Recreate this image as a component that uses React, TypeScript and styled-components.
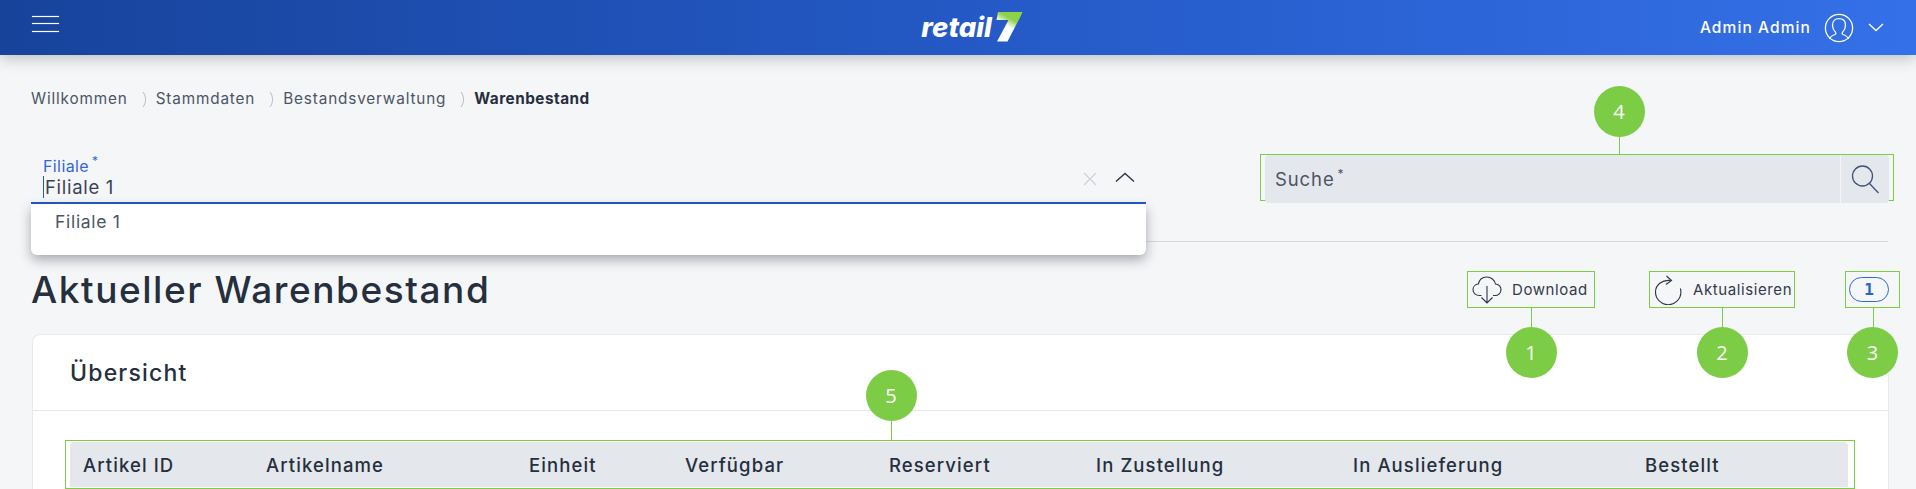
import styled, { createGlobalStyle } from "styled-components";

const green = "#7ccc45";
const ink = "#252f3d";
const slate = "#4b5565";
const blue = "#2059c8";

const crumbs = ["Willkommen", "Stammdaten", "Bestandsverwaltung"];

const columns = [
  "Artikel ID",
  "Artikelname",
  "Einheit",
  "Verfügbar",
  "Reserviert",
  "In Zustellung",
  "In Auslieferung",
  "Bestellt",
];

const App = () => {
  return (
    <>
      <GlobalStyle />
      <Header>
        <Burger aria-label="Menü">
          <span />
          <span />
          <span />
        </Burger>
        <Logo>
          <LogoText>retail</LogoText>
          <svg width="27" height="30" viewBox="0 0 27 30">
            <defs>
              <linearGradient id="seven" x1="0.7" y1="0" x2="0.2" y2="1">
                <stop offset="0.25" stopColor="#8ed24a" />
                <stop offset="0.5" stopColor="#ffffff" />
              </linearGradient>
            </defs>
            <path d="M2 0H26.5L24 5.5L11.5 29.5H1L12.5 8H0.5Z" fill="url(#seven)" />
          </svg>
        </Logo>
        <UserMenu>
          <UserName>Admin Admin</UserName>
          <svg width="30" height="30" viewBox="0 0 30 30" fill="none" stroke="#fff" strokeWidth="1.3">
            <circle cx="15" cy="15" r="13.6" />
            <path d="M5.5 26c.8-2.800 3-3.600 5.500-4.500 1-.4 1.100-1.600.4-2.400-1.900-2-2.900-4.400-2.900-6.900 0-3.900 2.500-6.500 6.500-6.500s6.500 2.600 6.500 6.500c0 2.500-1 4.900-2.900 6.900-.7.8-.6 2 .4 2.400 2.500.9 4.700 1.700 5.500 4.500" />
          </svg>
          <UserChevron width="16" height="9" viewBox="0 0 16 9" fill="none" stroke="#fff" strokeWidth="1.3">
            <path d="M1 1l7 6.5L15 1" />
          </UserChevron>
        </UserMenu>
      </Header>

      <Main>
        <Breadcrumb>
          {crumbs.map((crumb) => (
            <Crumb key={crumb}>
              {crumb}
              <CrumbSeparator width="6" height="17" viewBox="0 0 6 17" fill="none" stroke="#b5bcc6" strokeWidth="1">
                <path d="M1 1c3.400 4.600 3.400 10.400 0 15" />
              </CrumbSeparator>
            </Crumb>
          ))}
          <CurrentCrumb>Warenbestand</CurrentCrumb>
        </Breadcrumb>

        <FilterRow>
          <BranchField>
            <BranchLabel>
              Filiale<sup>*</sup>
            </BranchLabel>
            <BranchValue>Filiale 1</BranchValue>
            <BranchIcons>
              <svg width="14" height="14" viewBox="0 0 14 14" stroke="#cdd1d9" strokeWidth="1.2">
                <path d="M1 1l12 12M13 1L1 13" />
              </svg>
              <svg width="20" height="11" viewBox="0 0 20 11" fill="none" stroke="#2d3645" strokeWidth="1.4">
                <path d="M1 9.500L10 1.500l9 8" />
              </svg>
            </BranchIcons>
            <BranchMenu>
              <BranchOption>Filiale 1</BranchOption>
            </BranchMenu>
          </BranchField>

          <SearchFrame>
            <Callout $side="top" $stem={18} $offset={42}>
              4
            </Callout>
            <SearchField>
              <SearchLabel>
                Suche<sup>*</sup>
              </SearchLabel>
              <SearchButton aria-label="Suche">
                <svg width="30" height="30" viewBox="0 0 30 30" fill="none" stroke="#3f5378" strokeWidth="1.3">
                  <circle cx="12.500" cy="12" r="10" />
                  <path d="M19.500 19.500L28.500 29" />
                </svg>
              </SearchButton>
            </SearchField>
          </SearchFrame>
        </FilterRow>

        <Divider />

        <TitleRow>
          <PageTitle>Aktueller Warenbestand</PageTitle>
          <Actions>
            <ActionFrame $width={128}>
              <Callout $side="bottom" $stem={20}>
                1
              </Callout>
              <svg width="30" height="28" viewBox="0 0 30 28" fill="none" stroke="#2c3444" strokeWidth="1.1">
                <path d="M9.500 19.500H7.500C3.800 19.500 1 17 1 13.600c0-3 2.300-5.300 5.300-5.600C7.300 3.800 10.600 1 14.700 1c4.400 0 8 3 8.700 7 3.200.1 5.600 2.600 5.600 5.700 0 3.200-2.600 5.800-6 5.800h-2" />
                <path d="M15 10v17M9.500 21.500L15 27l5.500-5.500" />
              </svg>
              <ActionLabel $gap={10}>Download</ActionLabel>
            </ActionFrame>
            <ActionFrame $width={146}>
              <Callout $side="bottom" $stem={20}>
                2
              </Callout>
              <svg width="28" height="30" viewBox="0 0 28 30" fill="none" stroke="#2c3444" strokeWidth="1.1">
                <path d="M16.500 5.500C8 4.500 1.500 10 1.500 17a12.700 12.700 0 0 0 25.400 0c0-1.300-.2-2.500-.5-3.500" />
                <path d="M12.500 1l5 4.500-5.500 4" />
              </svg>
              <ActionLabel $gap={11}>Aktualisieren</ActionLabel>
            </ActionFrame>
            <CountFrame>
              <Callout $side="bottom" $stem={20}>
                3
              </Callout>
              <CountBadge>1</CountBadge>
            </CountFrame>
          </Actions>
        </TitleRow>

        <Card>
          <CardTitle>Übersicht</CardTitle>
          <TableArea>
            <TableFrame>
              <Callout $side="top" $stem={20} $offset={-69}>
                5
              </Callout>
              <TableHead>
                {columns.map((column) => (
                  <HeadCell key={column}>{column}</HeadCell>
                ))}
              </TableHead>
            </TableFrame>
          </TableArea>
        </Card>
      </Main>
    </>
  );
};

export default App;

const GlobalStyle = createGlobalStyle`
  html, body {
    margin: 0;
    height: 489px;
    overflow: hidden;
    background: #f5f6f8;
    font-family: Inter, "Noto Sans", sans-serif;
    color: ${ink};
  }
  * {
    box-sizing: border-box;
  }
  sup {
    font-size: 12px;
    line-height: 0;
    margin-left: 3px;
  }
`;

const Header = styled.header`
  position: relative;
  z-index: 2;
  height: 55px;
  display: grid;
  grid-template-columns: 1fr auto 1fr;
  align-items: center;
  padding: 0 32px;
  background: linear-gradient(90deg, #17439b 0%, #2459c5 50%, #3470e8 100%);
  box-shadow: 0 3px 14px rgba(30, 40, 50, 0.28);
`;

const Burger = styled.button`
  width: 27px;
  height: 16px;
  margin-top: -8px;
  padding: 0;
  border: 0;
  background: none;
  display: flex;
  flex-direction: column;
  justify-content: space-between;

  > span {
    display: block;
    height: 1px;
    background: #fff;
    box-shadow: 0 0 1px #fff;
  }
`;

const Logo = styled.div`
  display: flex;
  align-items: flex-end;
  gap: 4px;
  margin: -1px 0 0 28px;
`;

const LogoText = styled.span`
  font-size: 27.5px;
  line-height: 30px;
  font-weight: 800;
  font-style: italic;
  color: #fff;
`;

const UserMenu = styled.div`
  justify-self: end;
  display: flex;
  align-items: center;
`;

const UserName = styled.span`
  font-size: 15.5px;
  font-weight: 500;
  letter-spacing: 1.1px;
  color: #fff;
  margin-right: 13px;
`;

const UserChevron = styled.svg`
  margin-left: 14px;
`;

const Main = styled.main`
  padding: 33px 16px 0 31px;
`;

const Breadcrumb = styled.nav`
  height: 20px;
  display: flex;
  align-items: center;
  font-size: 15.3px;
  letter-spacing: 0.85px;
  color: ${slate};
`;

const Crumb = styled.span`
  display: flex;
  align-items: center;
`;

const CrumbSeparator = styled.svg`
  margin: 3px 8px 0 14px;
`;

const CurrentCrumb = styled.span`
  font-weight: 700;
  letter-spacing: 0.5px;
  color: ${ink};
`;

const FilterRow = styled.div`
  margin-top: 46px;
  height: 50px;
  display: flex;
  justify-content: space-between;
  align-items: flex-start;
`;

const BranchField = styled.div`
  position: relative;
  width: 1115px;
  height: 50px;
  padding: 1px 0 0 12px;
  border-bottom: 2px solid ${blue};
`;

const BranchLabel = styled.div`
  height: 21px;
  font-size: 16px;
  line-height: 22px;
  letter-spacing: 0.4px;
  color: #3368d8;

  > sup {
    position: relative;
    top: -1px;
  }
`;

const BranchValue = styled.div`
  height: 22px;
  padding-left: 1px;
  border-left: 1px solid ${blue};
  font-size: 18.5px;
  line-height: 22px;
  letter-spacing: 0.7px;
  color: #3a4351;
`;

const BranchIcons = styled.div`
  position: absolute;
  right: 11px;
  top: 18px;
  display: flex;
  align-items: flex-start;
  gap: 18px;
`;

const BranchMenu = styled.div`
  position: absolute;
  z-index: 1;
  left: 0;
  right: 0;
  top: 50px;
  height: 51px;
  padding: 6px 24px;
  background: #fff;
  border-radius: 0 0 6px 6px;
  box-shadow: 0 5px 12px rgba(40, 45, 55, 0.38);
`;

const BranchOption = styled.div`
  font-size: 17.5px;
  line-height: 24px;
  letter-spacing: 0.7px;
  color: ${slate};
`;

const Framed = styled.div`
  position: relative;
  border: 1px solid ${green};
`;

const Callout = styled.span<{ $side: "top" | "bottom"; $stem: number; $offset?: number }>`
  position: absolute;
  left: calc(50% + ${(p) => p.$offset ?? 0}px);
  ${(p) => (p.$side === "top" ? "bottom" : "top")}: calc(100% + ${(p) => p.$stem}px);
  width: 51px;
  height: 51px;
  margin-left: -25.5px;
  display: flex;
  align-items: center;
  justify-content: center;
  border-radius: 50%;
  background: ${green};
  font-family: "Open Sans", sans-serif;
  font-size: 20px;
  color: #fff;

  &::after {
    content: "";
    position: absolute;
    left: 50%;
    width: 1px;
    height: ${(p) => p.$stem}px;
    ${(p) => (p.$side === "top" ? "top" : "bottom")}: 100%;
    background: ${green};
  }
`;

const SearchFrame = styled(Framed)`
  width: 634px;
  height: 47px;
  margin-right: 6px;
  padding: 0 4px;
`;

const SearchField = styled.div`
  height: 48px;
  display: flex;
  align-items: stretch;
  justify-content: space-between;
  background: #e4e7ec;
  border-radius: 4px;
`;

const SearchLabel = styled.span`
  padding: 12px 0 0 10px;
  font-size: 18.5px;
  line-height: 24px;
  letter-spacing: 0.9px;
  color: ${slate};

  > sup {
    position: relative;
    top: -1px;
  }
`;

const SearchButton = styled.button`
  width: 49px;
  padding: 0 0 0 9px;
  display: flex;
  align-items: center;
  border: 0;
  border-left: 1px solid #f3f4f6;
  background: none;
`;

const Divider = styled.hr`
  margin: 37px 12px 0 0;
  border: 0;
  height: 1px;
  background: #d8d9dc;
`;

const TitleRow = styled.div`
  margin-top: 29px;
  height: 37px;
  display: flex;
  justify-content: space-between;
  align-items: center;
`;

const PageTitle = styled.h1`
  margin: 0;
  font-size: 37px;
  font-weight: 500;
  letter-spacing: 1.55px;
  color: ${ink};
`;

const Actions = styled.div`
  display: flex;
  gap: 50px;
  align-items: center;

  > :first-child {
    margin-right: 4px;
  }
`;

const ActionFrame = styled(Framed)<{ $width: number }>`
  width: ${(p) => p.$width}px;
  height: 37px;
  padding-left: 4px;
  display: flex;
  align-items: center;
`;

const ActionLabel = styled.span<{ $gap: number }>`
  margin-left: ${(p) => p.$gap}px;
  font-size: 15px;
  font-weight: 400;
  letter-spacing: 0.6px;
  white-space: nowrap;
  color: #333b4a;
`;

const CountFrame = styled(Framed)`
  width: 55px;
  height: 37px;
  display: flex;
  align-items: center;
  padding-left: 3px;
`;

const CountBadge = styled.span`
  width: 40px;
  height: 25px;
  display: flex;
  align-items: center;
  justify-content: center;
  border: 1px solid #2f6ad6;
  border-radius: 13px;
  font-family: "DejaVu Sans Mono", monospace;
  font-weight: 700;
  font-size: 16px;
  color: #2563d0;
`;

const Card = styled.section`
  margin: 26px 11px 0 1px;
  height: 155px;
  background: #fff;
  border: 1px solid #e8eaee;
  border-bottom: 0;
  border-radius: 8px 8px 0 0;
`;

const CardTitle = styled.h2`
  margin: 0;
  height: 76px;
  padding-left: 37px;
  border-bottom: 1px solid #e6e7ea;
  font-size: 23px;
  font-weight: 500;
  line-height: 76px;
  letter-spacing: 1.2px;
  color: ${ink};
`;

const TableArea = styled.div`
  padding: 29px 33px 0 32px;
`;

const TableFrame = styled(Framed)`
  height: 49px;
  padding: 1px 6px 1px 4px;
`;

const TableHead = styled.div`
  height: 45px;
  padding-left: 13px;
  display: grid;
  grid-template-columns: 183px 263px 156px 204px 207px 257px 292px 1fr;
  align-items: center;
  background: #e4e7ec;
  border-radius: 4px 4px 0 0;
`;

const HeadCell = styled.div`
  font-size: 18.5px;
  font-weight: 500;
  letter-spacing: 1.1px;
  color: ${ink};
`;
